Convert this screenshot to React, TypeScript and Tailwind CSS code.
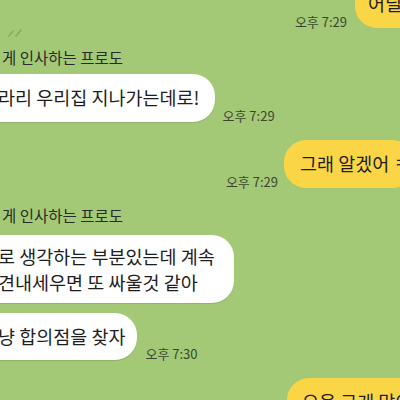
const font = { fontFamily: '"Noto Sans CJK KR", "Noto Sans", sans-serif' };

function Time({ children }: { children: string }) {
  return (
    <span className="shrink-0 text-[13px] leading-[14px] text-[#3a4730] whitespace-nowrap mb-[-1px]">
      {children}
    </span>
  );
}

export default function App() {
  return (
    <div
      className="w-[400px] h-[400px] overflow-hidden bg-[#a4c976] flex flex-col text-[#1e1e1e]"
      style={font}
    >
      {/* my message, cut off at top */}
      <div className="flex justify-end items-end gap-[8px] h-[48px] mt-[-20px] shrink-0">
        <Time>오후 7:29</Time>
        <div className="shrink-0 w-[110px] h-[48px] mr-[-65px] rounded-[22px] bg-[#fad646] pl-[13px] flex items-center text-[18.5px] whitespace-nowrap">
          어딜 가?
        </div>
      </div>

      <div className="h-[18px] pl-[8px] pt-[1px] shrink-0">
        <svg width="16" height="8" viewBox="0 0 16 8">
          <path d="M1 7 L5 2 M8 7 L13 1" stroke="#8da66c" strokeWidth="1.6" strokeLinecap="round" />
        </svg>
      </div>

      <div className="mt-[1px] h-[20px] leading-[20px] text-[15.5px] text-[#2a2a2a] whitespace-nowrap pl-[2px] shrink-0">
        게 인사하는 프로도
      </div>

      <div className="flex items-end gap-[8px] mt-[7px] shrink-0">
        <div className="shrink-0 h-[48px] ml-[-33px] rounded-[22px] bg-white pl-[14px] pr-[15px] flex items-center text-[18.5px] whitespace-nowrap shadow-[0_1px_1px_rgba(0,0,0,0.12)]">
          랄라리 우리집 지나가는데로!
        </div>
        <Time>오후 7:29</Time>
      </div>

      <div className="flex justify-end items-end gap-[6px] mt-[18px] shrink-0">
        <Time>오후 7:29</Time>
        <div className="shrink-0 w-[130px] h-[48px] mr-[-14px] rounded-[22px] bg-[#fad646] pl-[16px] flex items-center text-[18.5px] whitespace-nowrap overflow-hidden">
          그래 알겠어 ㅋㅋ
        </div>
      </div>

      <div className="mt-[17px] h-[20px] leading-[20px] text-[15.5px] text-[#2a2a2a] whitespace-nowrap pl-[2px] shrink-0">
        게 인사하는 프로도
      </div>

      <div className="flex mt-[10px] shrink-0">
        <div className="shrink-0 h-[68px] ml-[-33px] rounded-[22px] bg-white pl-[14px] pr-[19px] py-[8px] flex flex-col justify-center text-[18.5px] leading-[26px] whitespace-nowrap shadow-[0_1px_1px_rgba(0,0,0,0.12)]">
          <span>서로 생각하는 부분있는데 계속</span>
          <span>의견내세우면 또 싸울것 같아</span>
        </div>
      </div>

      <div className="flex items-end gap-[8px] mt-[10px] shrink-0">
        <div className="shrink-0 h-[47px] ml-[-33px] rounded-[22px] bg-white pl-[14px] pr-[12px] flex items-center text-[18.5px] whitespace-nowrap shadow-[0_1px_1px_rgba(0,0,0,0.12)]">
          그냥 합의점을 찾자
        </div>
        <Time>오후 7:30</Time>
      </div>

      <div className="flex justify-end mt-[18px] shrink-0">
        <div className="shrink-0 w-[140px] h-[48px] mr-[-27px] rounded-[22px] bg-[#fad646] pl-[15px] flex items-center text-[18.5px] whitespace-nowrap">
          으응 그게 맞아
        </div>
      </div>
    </div>
  );
}
